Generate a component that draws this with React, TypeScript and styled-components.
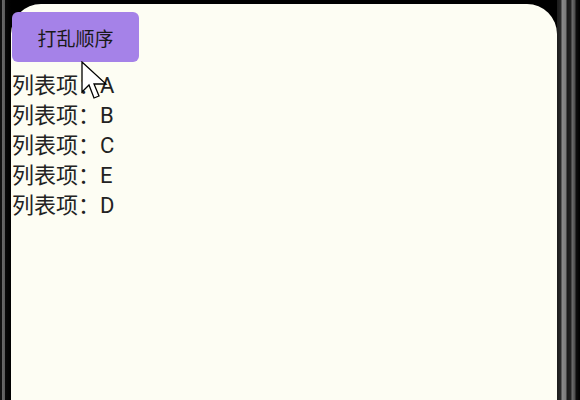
import React from 'react';
import styled, { createGlobalStyle } from 'styled-components';

const items = ['A', 'B', 'C', 'E', 'D'];

export default function App() {
  return (
    <>
      <GlobalStyle />
      <Frame>
        <Screen>
          <ShuffleButton>打乱顺序</ShuffleButton>
          <List>
            {items.map((item) => (
              <Item key={item}>列表项：{item}</Item>
            ))}
          </List>
        </Screen>
        <Cursor width="28" height="40" viewBox="0 0 28 40">
          <polygon
            points="1,1 1,31 8,24 13,37 18,35 13,23 25,23"
            fill="#ffffff"
            stroke="#000000"
            strokeWidth="1.3"
            strokeLinejoin="miter"
          />
        </Cursor>
      </Frame>
    </>
  );
}

const GlobalStyle = createGlobalStyle`
  html, body {
    margin: 0;
    padding: 0;
    background: #000;
  }
`;

const Frame = styled.div`
  position: relative;
  width: 580px;
  height: 400px;
  display: flex;
  overflow: hidden;
  background: linear-gradient(
    to right,
    #111 0px, #111 2px,
    #6a6a6a 2px, #5a5a5a 5px,
    #0a0a0a 5px, #000 11px,
    #000 557px,
    #1c1c1c 557px, #2a2a2a 561px,
    #8a8a8a 562px, #7a7a7a 566px,
    #1a1a1a 567px, #222 571px,
    #6e6e6e 572px, #4a4a4a 575px,
    #0e0e0e 576px, #000 580px
  );
`;

const Screen = styled.div`
  flex: 1;
  margin: 4px 23px 0 11px;
  padding: 8px 0 0 1px;
  border-radius: 30px 30px 0 0;
  background: #fdfdf3;
  display: flex;
  flex-direction: column;
  align-items: flex-start;
  font-family: Roboto, 'Noto Sans CJK SC', sans-serif;
`;

const ShuffleButton = styled.button`
  width: 127px;
  height: 50px;
  border: 0;
  border-radius: 6px;
  background: #a582e8;
  color: #1a1a1a;
  font-family: Roboto, 'Noto Sans CJK SC', sans-serif;
  font-size: 19px;
  padding: 0;
  cursor: pointer;
`;

const List = styled.div`
  margin-top: 9px;
  display: flex;
  flex-direction: column;
`;

const Item = styled.div`
  font-size: 22px;
  line-height: 30px;
  color: #222;
`;

const Cursor = styled.svg`
  position: absolute;
  left: 81px;
  top: 61px;
`;
